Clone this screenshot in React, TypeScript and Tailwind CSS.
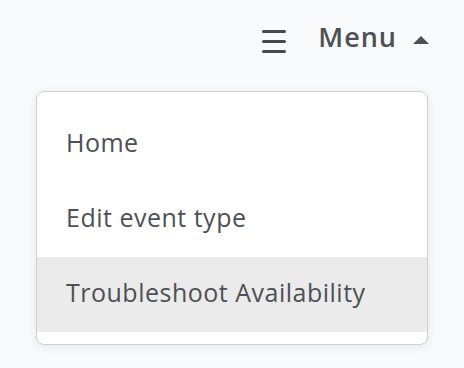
import { useState } from 'react'

const items = ['Home', 'Edit event type', 'Troubleshoot Availability']

export default function App() {
  const [active] = useState(2)

  return (
    <div
      className="h-[368px] w-[464px] bg-[#f9fafc] text-[#4d5055]"
      style={{ fontFamily: '"Open Sans", "Liberation Sans", sans-serif' }}
    >
      {/* Header */}
      <div className="flex h-[80px] items-start justify-end pr-[35px] pt-[21px]">
        <div className="mt-[9px] flex w-[24px] flex-col gap-[7px]">
          <span className="h-[3px] rounded-full bg-[#45484d]" />
          <span className="h-[3px] rounded-full bg-[#45484d]" />
          <span className="h-[3px] rounded-full bg-[#45484d]" />
        </div>
        <span className="ml-[32px] mt-[2px] text-[27px] font-semibold leading-none tracking-[1px]">Menu</span>
        <span className="ml-[16px] mt-[15px] h-0 w-0 border-x-[8px] border-b-[8px] border-x-transparent border-b-[#4d5055]" />
      </div>

      {/* Dropdown */}
      <div className="ml-[36px] mt-[11px] w-[392px] rounded-[8px] border border-[#cfcfcf] bg-white pt-[15px] pb-[12px] shadow-[0_2px_10px_rgba(0,0,0,0.08)]">
        {items.map((item, i) => (
          <div
            key={item}
            className={
              'flex h-[75px] items-center pl-[29px] pb-[4px] text-[25px] tracking-[0.5px] ' +
              (i === active ? 'bg-[#ebebeb]' : '')
            }
          >
            {item}
          </div>
        ))}
      </div>
    </div>
  )
}
